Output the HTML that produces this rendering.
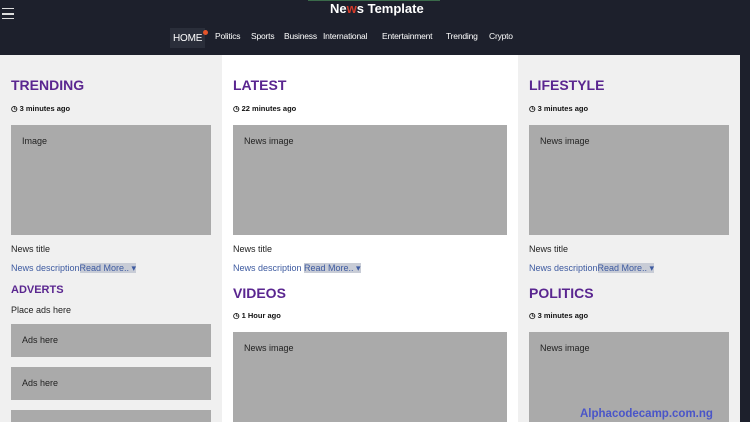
<!DOCTYPE html>
<html style="width:750px;height:422px;overflow:hidden"><head><style>
*{margin:0;padding:0;box-sizing:border-box}
body{width:750px;height:422px;overflow:hidden;position:relative;font-family:"Liberation Sans",sans-serif;background:#fff}
.a{position:absolute}
.hd{left:0;top:0;width:750px;height:55px;background:#1d202c}
.col{top:55px;height:367px}
h2{position:absolute;font-size:14px;font-weight:bold;color:#5a2690}
h3{position:absolute;font-size:11px;font-weight:bold;color:#5a2690}
.t{position:absolute;font-size:7.5px;font-weight:bold;color:#111}
.box{position:absolute;background:#aaa;font-size:9px;color:#222;padding:11px}
.p{position:absolute;font-size:9px;color:#222}
.d{position:absolute;font-size:9px;color:#3d5aa0}
.d span{background:#c8ccd6;color:#3d5aa0}
.nav{position:absolute;top:31px;font-size:8.5px;color:#fff;letter-spacing:-.2px}
</style></head><body>
<div class="a hd"></div>
<div class="a" style="left:2px;top:8px;width:12px;height:11px;border-top:1.5px solid #ddd;border-bottom:1.5px solid #ddd"></div>
<div class="a" style="left:2px;top:13px;width:12px;height:1.5px;background:#ddd"></div>
<div class="a" style="left:308px;top:0;width:132px;height:1px;background:#3a6a4a"></div>
<div class="a" style="left:330px;top:1px;font-size:13px;font-weight:bold;color:#fff">Ne<span style="color:#d23a2a">w</span>s Template</div>
<div class="a" style="left:170px;top:28px;width:35px;height:20px;background:#2a2e3a"></div>
<div class="nav" style="left:173px;top:33px;font-size:10px">HOME</div>
<div class="a" style="left:203px;top:30px;width:5px;height:5px;border-radius:50%;background:#e4542a"></div>
<div class="nav" style="left:215px">Politics</div>
<div class="nav" style="left:251px">Sports</div>
<div class="nav" style="left:284px">Business</div>
<div class="nav" style="left:323px">International</div>
<div class="nav" style="left:382px">Entertainment</div>
<div class="nav" style="left:446px">Trending</div>
<div class="nav" style="left:489px">Crypto</div>

<div class="a col" style="left:0;width:222px;background:#f0f0f0"></div>
<div class="a col" style="left:518px;width:222px;background:#f0f0f0"></div>
<div class="a col" style="left:740px;width:10px;background:#1d202c"></div>

<h2 style="left:11px;top:77px">TRENDING</h2>
<div class="t" style="left:11px;top:104px">◷ 3 minutes ago</div>
<div class="box" style="left:11px;top:125px;width:200px;height:110px">Image</div>
<div class="p" style="left:11px;top:244px">News title</div>
<div class="d" style="left:11px;top:263px">News description<span>Read More.. ▾</span></div>
<h3 style="left:11px;top:284px">ADVERTS</h3>
<div class="p" style="left:11px;top:305px">Place ads here</div>
<div class="box" style="left:11px;top:324px;width:200px;height:33px">Ads here</div>
<div class="box" style="left:11px;top:367px;width:200px;height:33px">Ads here</div>
<div class="box" style="left:11px;top:410px;width:200px;height:12px;padding:0"></div>

<h2 style="left:233px;top:77px">LATEST</h2>
<div class="t" style="left:233px;top:104px">◷ 22 minutes ago</div>
<div class="box" style="left:233px;top:125px;width:274px;height:110px">News image</div>
<div class="p" style="left:233px;top:244px">News title</div>
<div class="d" style="left:233px;top:263px">News description <span>Read More.. ▾</span></div>
<h2 style="left:233px;top:285px">VIDEOS</h2>
<div class="t" style="left:233px;top:311px">◷ 1 Hour ago</div>
<div class="box" style="left:233px;top:332px;width:274px;height:90px">News image</div>

<h2 style="left:529px;top:77px">LIFESTYLE</h2>
<div class="t" style="left:529px;top:104px">◷ 3 minutes ago</div>
<div class="box" style="left:529px;top:125px;width:200px;height:110px">News image</div>
<div class="p" style="left:529px;top:244px">News title</div>
<div class="d" style="left:529px;top:263px">News description<span>Read More.. ▾</span></div>
<h2 style="left:529px;top:285px">POLITICS</h2>
<div class="t" style="left:529px;top:311px">◷ 3 minutes ago</div>
<div class="box" style="left:529px;top:332px;width:200px;height:90px">News image</div>
<div class="a" style="left:580px;top:408px;font-size:11.5px;font-weight:bold;color:#4a55c8">Alphacodecamp.com.ng</div>
</body></html>
